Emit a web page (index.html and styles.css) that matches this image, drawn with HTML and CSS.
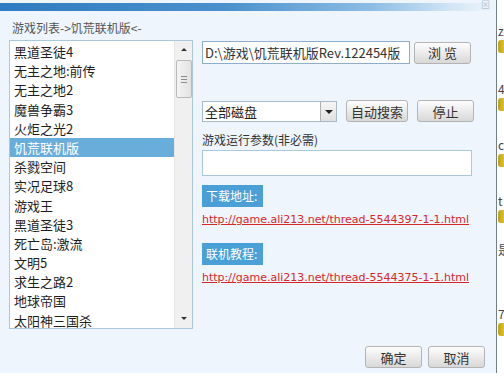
FILE: index.html
```html
<!DOCTYPE html>
<html lang="zh-CN">
<head>
  <meta charset="UTF-8" />
  <title>游戏列表</title>
  <link rel="stylesheet" href="styles.css">
</head>
<body>
  <div class="page">
    <div class="dialog">
      <div class="titlebar"><span class="close">&#x22A0;</span></div>
      <div class="body">
        <!-- game list -->
        <div class="left">
          <div class="caption">游戏列表-&gt;饥荒联机版&lt;-</div>
          <div class="listbox">
            <ul class="items">
              <li>黑道圣徒4</li>
              <li>无主之地:前传</li>
              <li>无主之地2</li>
              <li>魔兽争霸3</li>
              <li>火炬之光2</li>
              <li class="selected">饥荒联机版</li>
              <li>杀戮空间</li>
              <li>实况足球8</li>
              <li>游戏王</li>
              <li>黑道圣徒3</li>
              <li>死亡岛:激流</li>
              <li>文明5</li>
              <li>求生之路2</li>
              <li>地球帝国</li>
              <li>太阳神三国杀</li>
            </ul>
            <div class="scrollbar">
              <span class="arrow up"></span>
              <span class="thumb"><i></i><i></i><i></i></span>
              <span class="track"></span>
              <span class="arrow down"></span>
            </div>
          </div>
        </div>

        <!-- settings -->
        <div class="right">
          <div class="row">
            <div class="field path">D:\游戏\饥荒联机版Rev.122454版</div>
            <button class="btn wide">浏 览</button>
          </div>
          <div class="row second">
            <div class="field select">全部磁盘<span class="drop"></span></div>
            <button class="btn">自动搜索</button>
            <button class="btn wide">停止</button>
          </div>
          <div class="label">游戏运行参数(非必需)</div>
          <div class="field params"></div>
          <div class="badge">下载地址:</div>
          <a class="link" href="#">http://game.ali213.net/thread-5544397-1-1.html</a>
          <div class="badge second-badge">联机教程:</div>
          <a class="link" href="#">http://game.ali213.net/thread-5544375-1-1.html</a>
          <div class="footer">
            <button class="btn wide">确定</button>
            <button class="btn wide">取消</button>
          </div>
        </div>
      </div>
    </div>

    <!-- window behind the dialog -->
    <div class="strip">
      <div class="peek" style="margin-top: 24px">z</div>
      <div class="tag"></div>
      <div class="peek" style="margin-top: 29px">4</div>
      <div class="tag"></div>
      <div class="peek" style="margin-top: 27px">c</div>
      <div class="tag"></div>
      <div class="peek" style="margin-top: 27px">t</div>
      <div class="tag"></div>
      <div class="peek" style="margin-top: 20px">是</div>
      <div class="peek" style="margin-top: 50px">7</div>
      <div class="tag"></div>
    </div>
  </div>
</body>
</html>
```

FILE: styles.css
```css
* {
  margin: 0;
  padding: 0;
  box-sizing: border-box;
}
body {
  background: #fff;
  font-family: "Noto Sans CJK SC", "Noto Sans", sans-serif;
  color: #222;
  width: 504px;
  height: 379px;
  overflow: hidden;
}
.page {
  display: flex;
  height: 379px;
}
.dialog {
  width: 497px;
  height: 373px;
  background: #eef5fc;
  border-right: 1px solid #6f7f8c;
}
.titlebar {
  position: relative;
  height: 8px;
  margin-top: 3px;
  background: linear-gradient(to right, #2f7bc0, #4a90cc 45%, #8dbde4 75%, #d6e8f6 92%, #eef5fc);
}
.close {
  position: absolute;
  right: 6px;
  top: -3px;
  font-size: 9px;
  line-height: 9px;
  color: #b5c4d0;
}
.body {
  display: flex;
  padding-left: 9px;
}

/* left list */
.left {
  width: 184px;
}
.caption {
  margin-top: 9px;
  height: 16px;
  line-height: 16px;
  font-size: 12px;
  color: #555;
  padding-left: 3px;
}
.listbox {
  margin-top: 4px;
  height: 289px;
  background: #fff;
  border: 1px solid #a9c8de;
  display: flex;
  overflow: hidden;
}
.items {
  list-style: none;
  flex: 1;
  padding-top: 1px;
}
.items li {
  height: 19.2px;
  line-height: 19.2px;
  font-size: 13px;
  padding-left: 4px;
  color: #1e1e1e;
  white-space: nowrap;
}
.items li.selected {
  background: #69aedb;
  color: #fff;
}
.scrollbar {
  width: 18px;
  background: #f0f0f0;
  border-left: 1px solid #e6e6e6;
  display: flex;
  flex-direction: column;
  align-items: center;
}
.arrow {
  width: 0;
  height: 0;
  border-left: 3px solid transparent;
  border-right: 3px solid transparent;
}
.arrow.up {
  margin-top: 7px;
  border-bottom: 3px solid #333;
}
.arrow.down {
  margin-bottom: 8px;
  border-top: 3px solid #333;
}
.thumb {
  margin-top: 9px;
  width: 16px;
  height: 38px;
  background: linear-gradient(to right, #f4f4f4, #e2e2e2);
  border: 1px solid #b9b9b9;
  border-radius: 2px;
  display: flex;
  flex-direction: column;
  align-items: center;
  justify-content: center;
  gap: 2px;
}
.thumb i {
  display: block;
  width: 6px;
  height: 1px;
  background: #8a8a8a;
}
.track {
  flex: 1;
}

/* right panel */
.right {
  margin-left: 9px;
  width: 283px;
  padding-top: 30px;
  display: flex;
  flex-direction: column;
  align-items: flex-start;
}
.row {
  display: flex;
  align-items: center;
  gap: 4px;
}
.row.second {
  margin-top: 36px;
  gap: 0;
}
.field {
  background: #fff;
  border: 1px solid #a9c8de;
}
.path {
  width: 208px;
  height: 23px;
  line-height: 21px;
  font-size: 13px;
  padding-left: 2px;
  color: #333;
  white-space: nowrap;
  overflow: hidden;
  border-color: #8eaecc;
}
.select {
  position: relative;
  width: 135px;
  height: 21px;
  line-height: 19px;
  font-size: 13px;
  padding-left: 2px;
  border-color: #a9b9c8;
  margin-right: 9px;
}
.drop {
  position: absolute;
  right: 0;
  top: 0;
  width: 16px;
  height: 19px;
  border-left: 1px solid #b0b0b0;
  background: linear-gradient(#f6f6f6, #e0e0e0);
}
.drop::after {
  content: "";
  position: absolute;
  left: 4px;
  top: 8px;
  border-left: 4px solid transparent;
  border-right: 4px solid transparent;
  border-top: 4px solid #222;
}
.btn {
  height: 22px;
  padding: 0 4px;
  font-family: inherit;
  font-size: 13px;
  color: #333;
  background: linear-gradient(#fdfdfd, #d8d8d8);
  border: 1px solid #b4b4b4;
  border-radius: 3px;
}
.btn.wide {
  width: 57px;
}
.row.second .btn + .btn {
  margin-left: 9px;
}
.label {
  margin-top: 10px;
  height: 16px;
  line-height: 16px;
  font-size: 12px;
  color: #333;
}
.params {
  margin-top: 2px;
  width: 270px;
  height: 26px;
}
.badge {
  margin-top: 9px;
  width: 61px;
  height: 22px;
  line-height: 22px;
  font-size: 12px;
  padding-left: 4px;
  background: #4a9fd6;
  color: #fff;
}
.badge.second-badge {
  margin-top: 15px;
}
.link {
  margin-top: 5px;
  height: 16px;
  line-height: 16px;
  font-family: "DejaVu Sans", Verdana, sans-serif;
  font-size: 11px;
  color: #d7262b;
  text-decoration: underline;
  white-space: nowrap;
}
.footer {
  margin-top: 60px;
  align-self: stretch;
  display: flex;
  justify-content: flex-end;
  gap: 6px;
}

/* behind window */
.strip {
  flex: 1;
  overflow: hidden;
  padding-left: 1px;
}
.peek {
  height: 14px;
  line-height: 14px;
  font-size: 12px;
  color: #444;
  white-space: nowrap;
}
.tag {
  margin-top: 2px;
  width: 10px;
  height: 13px;
  border-radius: 3px;
  background: linear-gradient(to right, #b9a21a, #efd935);
}
```
